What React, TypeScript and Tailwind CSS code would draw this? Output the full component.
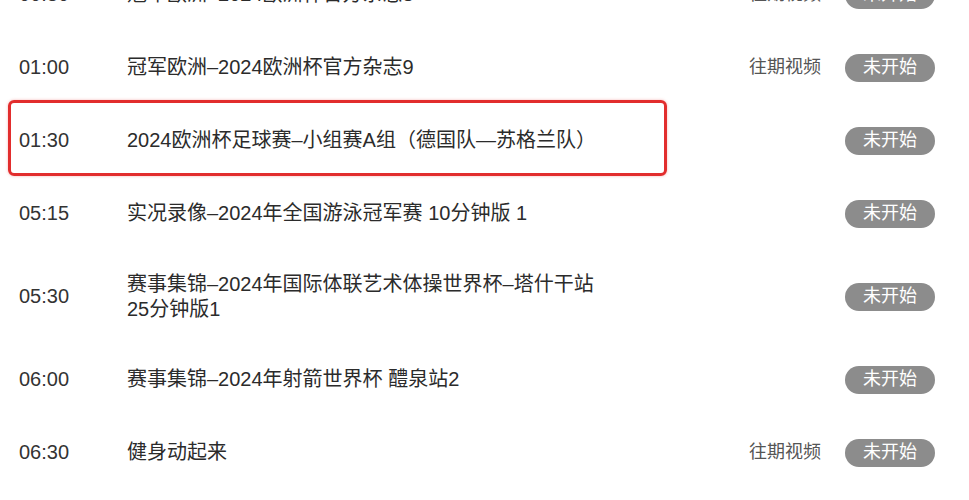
import React from 'react'

interface Program {
  time: string
  title: string
  replay?: boolean
  highlight?: boolean
}

const programs: Program[] = [
  { time: '00:30', title: '冠军欧洲–2024欧洲杯官方杂志8', replay: true },
  { time: '01:00', title: '冠军欧洲–2024欧洲杯官方杂志9', replay: true },
  { time: '01:30', title: '2024欧洲杯足球赛–小组赛A组（德国队—苏格兰队）', highlight: true },
  { time: '05:15', title: '实况录像–2024年全国游泳冠军赛 10分钟版 1' },
  { time: '05:30', title: '赛事集锦–2024年国际体联艺术体操世界杯–塔什干站25分钟版1' },
  { time: '06:00', title: '赛事集锦–2024年射箭世界杯 醴泉站2' },
  { time: '06:30', title: '健身动起来', replay: true },
  { time: '07:00', title: '实况录像–2024年全国田径锦标赛' },
]

function Row({ item }: { item: Program }) {
  return (
    <div className="relative flex items-center min-h-[73px] py-[21.5px]">
      {/* Time */}
      <div className="w-[127px] shrink-0 pl-[19px] text-[20px] leading-[25px] text-[#333]">{item.time}</div>

      {/* Title */}
      <div className="w-[480px] shrink-0 text-[20px] leading-[25px] text-[#2b2b2b]">{item.title}</div>

      <div className="flex-1" />

      {/* Right side */}
      {item.replay && (
        <span className="text-[18px] leading-[25px] text-[#555] mr-[24px]">往期视频</span>
      )}
      <span className="mr-[34px] flex h-[28px] w-[90px] items-center justify-center rounded-full bg-[#8c8c8c] text-[18px] text-white">
        未开始
      </span>

      {/* Annotation box */}
      {item.highlight && (
        <div className="pointer-events-none absolute left-[8px] top-[-4px] h-[76px] w-[659px] rounded-[6px] border-[3px] border-[#e22d2d] shadow-[0_0_3px_rgba(226,45,45,0.35)]" />
      )}
    </div>
  )
}

export default function App() {
  return (
    <div
      className="h-[500px] w-[969px] overflow-hidden bg-white"
      style={{ fontFamily: '"Liberation Sans", "Noto Sans CJK SC", sans-serif' }}
    >
      <div className="-mt-[42px]">
        {programs.map((p, i) => (
          <Row key={i} item={p} />
        ))}
      </div>
    </div>
  )
}
